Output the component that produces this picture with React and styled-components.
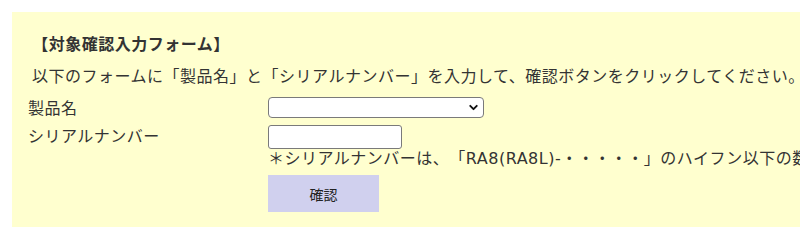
import styled, { createGlobalStyle } from 'styled-components';
import { ChevronDown } from 'lucide-react';

const GlobalStyle = createGlobalStyle`
  html, body {
    margin: 0;
    padding: 0;
    background: #ffffff;
    overflow: hidden;
  }
  body {
    font-family: "Noto Sans CJK JP", "Noto Sans", sans-serif;
    color: #333333;
    text-spacing-trim: space-all;
  }
`;

const App = () => {
  return (
    <>
      <GlobalStyle />
      <Panel>
        <Title> 【対象確認入力フォーム】</Title>
        <Lead> 以下のフォームに「製品名」と「シリアルナンバー」を入力して、確認ボタンをクリックしてください。</Lead>

        <FormGrid>
          <Label>製品名</Label>
          <Field>
            <SelectWrap>
              <Select defaultValue="">
                <option value=""></option>
              </Select>
              <Chevron size={13} strokeWidth={3.5} />
            </SelectWrap>
          </Field>

          <Label>シリアルナンバー</Label>
          <Field>
            <TextInput type="text" />
            <Note>＊シリアルナンバーは、「RA8(RA8L)-・・・・・」のハイフン以下の数字を入力してください。</Note>
          </Field>

          <span />
          <Field>
            <SubmitButton type="button">確認</SubmitButton>
          </Field>
        </FormGrid>
      </Panel>
    </>
  );
};

export default App;

const Panel = styled.section`
  box-sizing: border-box;
  width: 1100px;
  margin: 12px 0 0 12px;
  padding: 19px 16px 15px 16px;
  background-color: #ffffcf;
  letter-spacing: 0.5px;
`;

const Title = styled.h3`
  margin: 0 0 8px 0;
  font-size: 16px;
  line-height: 24px;
  font-weight: 700;
  white-space: pre;
`;

const Lead = styled.p`
  margin: 0 0 10px 0;
  font-size: 16px;
  line-height: 24px;
  white-space: pre;
`;

const FormGrid = styled.div`
  display: grid;
  grid-template-columns: 240px auto;
  row-gap: 7px;
  align-items: start;
`;

const Label = styled.div`
  font-size: 16px;
  line-height: 21px;
  white-space: nowrap;
`;

const Field = styled.div`
  display: flex;
  flex-direction: column;
  align-items: flex-start;
`;

const SelectWrap = styled.div`
  position: relative;
  width: 216px;
  height: 21px;
`;

const Select = styled.select`
  appearance: none;
  box-sizing: border-box;
  display: block;
  width: 100%;
  height: 100%;
  margin: 0;
  padding: 0 24px 0 6px;
  border: 1px solid #7a7a7a;
  border-radius: 4px;
  background: #ffffff;
  font-family: inherit;
  font-size: 13px;
`;

const Chevron = styled(ChevronDown)`
  position: absolute;
  right: 4px;
  top: 4px;
  color: #111111;
  pointer-events: none;
`;

const TextInput = styled.input`
  box-sizing: border-box;
  display: block;
  width: 134px;
  height: 24px;
  margin: 0;
  padding: 0 4px;
  border: 1px solid #7a7a7a;
  border-radius: 3px;
  background: #ffffff;
  font-family: inherit;
  font-size: 13px;
`;

const Note = styled.div`
  font-family: "DejaVu Sans", "Noto Sans CJK JP", sans-serif;
  font-size: 16px;
  line-height: 19px;
  white-space: nowrap;
`;

const SubmitButton = styled.button`
  width: 111px;
  height: 37px;
  border: none;
  border-radius: 0;
  background-color: #d0d0ee;
  color: #222222;
  font-family: inherit;
  font-size: 14px;
  letter-spacing: 0;
  cursor: pointer;
`;
